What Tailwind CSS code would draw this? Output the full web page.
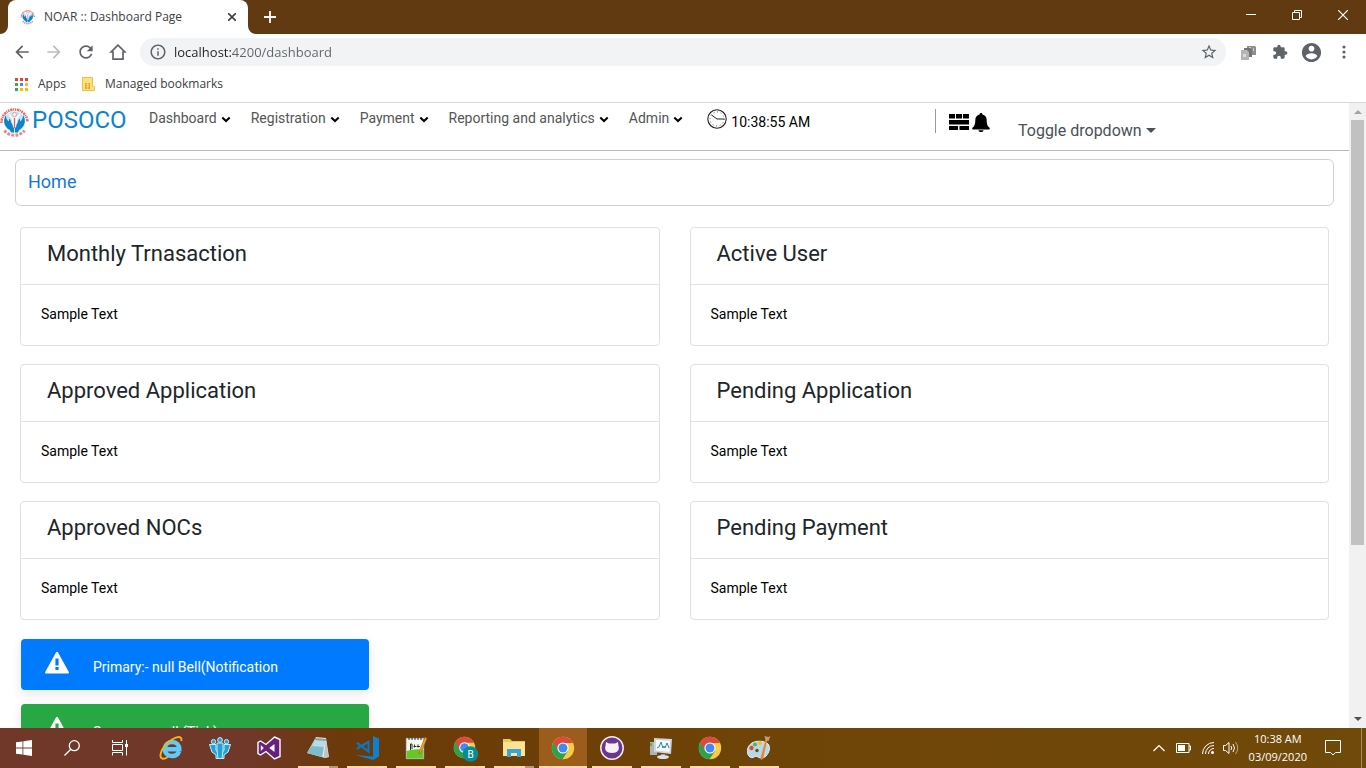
<!DOCTYPE html>
<html lang="en">

<head>
    <meta charset="UTF-8" />
    <meta name="viewport" content="width=device-width, initial-scale=1.0" />
    <title>NOAR :: Dashboard Page</title>
    <script src="https://cdn.jsdelivr.net/npm/@tailwindcss/browser@4"></script>
</head>

<body class="h-screen flex flex-col overflow-hidden bg-white font-['Roboto',sans-serif] text-black">
    <!-- Shared drawings -->
    <svg class="hidden">
        <symbol id="posoco" viewBox="0 0 32 32">
            <path d="M2.500 17A13 13 0 0 1 28.500 16" fill="none" stroke="#e0706c" stroke-width="2.600" stroke-dasharray="1.600 .7 2.400 .6 1 .7" />
            <path d="M5.500 24.500A12.800 12.800 0 0 0 25.500 24.500" fill="none" stroke="#e58a87" stroke-width="3" stroke-dasharray="2.800 1.300" />
            <circle cx="15.500" cy="16" r="10.500" fill="#bfe6f7" />
            <path d="M7 9c-3.500 5-2 12 4 15l1 2.500h3V20c-2-2-3-3-3.500-6L10 12.500v3C7.500 14 7 12 7 9zM24 9c3.500 5 2 12-4 15l-1 2.500h-3V20c2-2 3-3 3.500-6l1.500-1.500v3c2.500-1.500 3-3.500 3-6.500z" fill="#0b84cc" />
            <path d="M10.500 7.500l3.500 4h3l3.500-4 1 1-3.500 5.500-1 7.500h-3L13 14 9.500 8.500z" fill="#fff" />
            <circle cx="15.500" cy="8.500" r="2" fill="#fff" stroke="#e98f8b" stroke-width=".8" />
            <path d="M15.500 12v10" stroke="#df625e" stroke-width="1.400" />
        </symbol>
        <symbol id="chevron" viewBox="0 0 10 7">
            <path d="M1.300 1.500L5 5l3.700-3.500" fill="none" stroke="#000" stroke-width="2" />
        </symbol>
        <symbol id="warning" viewBox="0 0 24 24">
            <path d="M1 22.500h22c.8 0 1.200-.7.800-1.400L12.900 1.200c-.4-.7-1.400-.7-1.800 0L.2 21.100c-.4.700 0 1.400.8 1.400zM10.400 7.500h3.200v7h-3.200zm0 8.500h3.200v3h-3.200z" fill="#fff" fill-rule="evenodd" />
        </symbol>
        <symbol id="chrome" viewBox="0 0 24 24">
            <circle cx="12" cy="12" r="11.200" fill="#fbcb43" />
            <path d="M12 12L2.300 6.400A11.200 11.200 0 0 0 11.500 23.200L17 15z" fill="#2ba24c" />
            <path d="M12 12l-5 2.500L2.300 6.400A11.200 11.200 0 0 1 22 7H12z" fill="#dc4a3e" />
            <circle cx="12" cy="12" r="5.600" fill="#fff" />
            <circle cx="12" cy="12" r="4.500" fill="#4688f1" />
        </symbol>
    </svg>

    <!-- Tab strip -->
    <div class="h-[34px] shrink-0 bg-[#613a12] flex items-stretch pl-2">
        <div class="relative w-60 bg-white rounded-t-lg flex items-center px-3 font-['Open_Sans',sans-serif] text-xs text-[#3c4043]">
            <svg class="absolute bottom-0 -left-2 size-2" viewBox="0 0 8 8"><path d="M8 0v8H0a8 8 0 0 0 8-8z" fill="#fff" /></svg>
            <svg class="absolute bottom-0 -right-2 size-2" viewBox="0 0 8 8"><path d="M0 0v8h8a8 8 0 0 1-8-8z" fill="#fff" /></svg>
            <svg class="size-4 mr-2"><use href="#posoco" /></svg>
            <span class="flex-1 whitespace-nowrap">NOAR :: Dashboard Page</span>
            <button aria-label="Close tab"><svg class="size-2" viewBox="0 0 8 8"><path d="M0 0l8 8M8 0L0 8" stroke="#3c4043" stroke-width="1.600" /></svg></button>
        </div>
        <button aria-label="New tab" class="ml-4"><svg class="size-3" viewBox="0 0 12 12"><path d="M6 0v12M0 6h12" stroke="#fff" stroke-width="1.800" /></svg></button>
        <div class="ml-auto flex pb-[5px]">
            <button aria-label="Minimize" class="w-[46px] flex items-center justify-center"><svg class="size-[10px]" viewBox="0 0 10 10"><path d="M0 4.500h10" stroke="#fff" /></svg></button>
            <button aria-label="Restore" class="w-[46px] flex items-center justify-center"><svg class="size-[10px]" viewBox="0 0 10 10"><path d="M.5 2.500h7v7h-7zM2.500 2.500v-2h7v7h-2" fill="none" stroke="#fff" /></svg></button>
            <button aria-label="Close" class="w-[46px] flex items-center justify-center"><svg class="size-[10px]" viewBox="0 0 10 10"><path d="M0 0l10 10M10 0L0 10" stroke="#fff" stroke-width="1.200" /></svg></button>
        </div>
    </div>

    <!-- Address bar -->
    <div class="h-9 shrink-0 flex items-center pl-3 pr-[13px] text-[#5f6368]">
        <button aria-label="Back" class="mr-3"><svg class="size-5" viewBox="0 0 24 24" fill="currentColor"><path d="M20 11H7.830l5.590-5.590L12 4l-8 8 8 8 1.410-1.410L7.830 13H20v-2z" /></svg></button>
        <button aria-label="Forward" class="mr-3 text-[#babcbe]"><svg class="size-5" viewBox="0 0 24 24" fill="currentColor"><path d="M12 4l-1.410 1.410L16.170 11H4v2h12.170l-5.580 5.590L12 20l8-8z" /></svg></button>
        <button aria-label="Reload" class="mr-3"><svg class="size-5" viewBox="0 0 24 24" fill="currentColor"><path d="M17.650 6.350C16.200 4.900 14.210 4 12 4c-4.420 0-7.990 3.580-7.990 8s3.570 8 7.990 8c3.730 0 6.840-2.550 7.730-6h-2.080c-.82 2.330-3.040 4-5.650 4-3.310 0-6-2.690-6-6s2.690-6 6-6c1.660 0 3.140.69 4.220 1.780L13 11h7V4l-2.350 2.350z" /></svg></button>
        <button aria-label="Home" class="mr-3"><svg class="size-5" viewBox="0 0 24 24" fill="none" stroke="currentColor" stroke-width="2"><path d="M12 3.800L3.800 12H6v8.500h12V12h2.200z" /></svg></button>
        <div class="flex-1 h-7 rounded-full bg-[#f1f3f4] flex items-center px-2">
            <svg class="size-[18px] mx-px" viewBox="0 0 24 24" fill="currentColor"><path d="M11 7h2v2h-2zm0 4h2v6h-2zm1-9C6.480 2 2 6.480 2 12s4.480 10 10 10 10-4.480 10-10S17.520 2 12 2zm0 18c-4.410 0-8-3.590-8-8s3.590-8 8-8 8 3.590 8 8-3.590 8-8 8z" /></svg>
            <input type="text" aria-label="Address" value="localhost:4200/dashboard" class="flex-1 ml-[6px] pt-[2px] outline-none font-['Open_Sans',sans-serif] text-[13px] text-transparent bg-clip-text bg-[linear-gradient(90deg,#202124_57px,#5f6368_57px)]" />
            <button aria-label="Bookmark this tab"><svg class="size-[18px]" viewBox="0 0 24 24" fill="currentColor"><path d="M22 9.240l-7.190-.62L12 2 9.190 8.630 2 9.240l5.460 4.730L5.820 21 12 17.270 18.180 21l-1.630-7.030L22 9.240zM12 15.400l-3.760 2.270 1-4.280-3.320-2.880 4.380-.38L12 6.100l1.710 4.040 4.380.38-3.320 2.880 1 4.280L12 15.400z" /></svg></button>
        </div>
        <div class="flex items-center ml-3">
            <button aria-label="Copy extension" class="mr-4 ml-[3px]"><svg class="size-[15px]" viewBox="0 0 15 15"><path d="M6 1h8l1 1v8H6z" fill="#8d8d8d" /><path d="M8 2h2v1H8zM12 3h1v3h-1z" fill="#ccc" /><path d="M3 3h6l2 2v7H3z" fill="#747474" /><path d="M0 5h6l2 2v8H0z" fill="#b5b5b5" /><path d="M2 9h3v3H2z" fill="#dadada" /></svg></button>
            <button aria-label="Extensions" class="mr-3"><svg class="size-4" viewBox="0 0 24 24" fill="currentColor"><path d="M20.500 11H19V7c0-1.100-.9-2-2-2h-4V3.500C13 2.120 11.880 1 10.500 1S8 2.120 8 3.500V5H4c-1.100 0-1.990.9-1.990 2v3.800H3.500c1.490 0 2.700 1.210 2.700 2.700s-1.210 2.700-2.700 2.700H2V20c0 1.100.9 2 2 2h3.800v-1.500c0-1.490 1.210-2.700 2.700-2.700 1.490 0 2.700 1.210 2.700 2.700V22H17c1.100 0 2-.9 2-2v-4h1.500c1.380 0 2.500-1.120 2.500-2.500S21.880 11 20.500 11z" /></svg></button>
            <button aria-label="Profile" class="mr-3"><svg class="size-[23px]" viewBox="0 0 24 24" fill="currentColor"><path d="M12 2C6.480 2 2 6.480 2 12s4.480 10 10 10 10-4.480 10-10S17.520 2 12 2zm0 3c1.660 0 3 1.340 3 3s-1.340 3-3 3-3-1.340-3-3 1.340-3 3-3zm0 14.200c-2.500 0-4.710-1.280-6-3.220.03-1.990 4-3.080 6-3.080 1.990 0 5.970 1.090 6 3.080-1.290 1.940-3.500 3.220-6 3.220z" /></svg></button>
            <button aria-label="Menu"><svg class="size-[18px]" viewBox="0 0 18 18" fill="currentColor"><circle cx="9" cy="4" r="1.600" /><circle cx="9" cy="9" r="1.600" /><circle cx="9" cy="14" r="1.600" /></svg></button>
        </div>
    </div>

    <!-- Bookmarks -->
    <div class="h-[33px] shrink-0 border-b border-[#d6d8db] flex items-center pb-1 pl-[15px] font-['Open_Sans',sans-serif] text-xs text-[#3c4043]">
        <a href="#" class="flex items-center mr-4">
            <svg class="size-[13px] mr-[10px]" viewBox="0 0 13 13">
                <path d="M0 0h3v3H0zM5 0h3v3H5z" fill="#ea4335" /><path d="M10 0h3v3h-3z" fill="#ea4335" />
                <path d="M0 5h3v3H0zM0 10h3v3H0z" fill="#34a853" /><path d="M5 5h3v3H5z" fill="#4285f4" />
                <path d="M10 5h3v3h-3zM5 10h3v3H5zM10 10h3v3h-3z" fill="#fbbc05" />
            </svg>Apps</a>
        <a href="#" class="flex items-center">
            <svg class="w-[13px] h-[14px] mr-[10px]" viewBox="0 0 13 14"><path d="M.5.500h10v9h2v4H.5z" fill="#ffe07d" stroke="#edc244" /><path d="M3 6h5v6H3z" fill="#e0ad2f" /><path d="M4 7.500h3M4 9.500h3M5.500 6v6" stroke="#ffe07d" stroke-width=".7" /></svg>Managed bookmarks</a>
    </div>

    <!-- Page viewport -->
    <div class="flex-1 min-h-0 flex">
        <div class="flex-1 min-w-0 overflow-hidden">
            <header class="h-12 border-b border-[#b9b9bd] flex items-start text-sm">
                <a href="#" class="flex items-start w-[149px] text-2xl leading-[34px] text-[#0b84cc]"><svg class="size-8 mt-[3px] -ml-px mr-px"><use href="#posoco" /></svg>POSOCO</a>
                <nav class="flex gap-5 pt-[5px] leading-5 text-[#555]">
                    <button class="flex items-center gap-1">Dashboard<svg class="w-[10px] h-[7px] mt-[2px]"><use href="#chevron" /></svg></button>
                    <button class="flex items-center gap-1">Registration<svg class="w-[10px] h-[7px] mt-[2px]"><use href="#chevron" /></svg></button>
                    <button class="flex items-center gap-1">Payment<svg class="w-[10px] h-[7px] mt-[2px]"><use href="#chevron" /></svg></button>
                    <button class="flex items-center gap-1">Reporting and analytics<svg class="w-[10px] h-[7px] mt-[2px]"><use href="#chevron" /></svg></button>
                    <button class="flex items-center gap-1">Admin<svg class="w-[10px] h-[7px] mt-[2px]"><use href="#chevron" /></svg></button>
                </nav>
                <div class="flex items-start ml-6 pt-[6px]">
                    <svg class="size-5 mr-1" viewBox="0 0 20 20" fill="none" stroke="#222"><circle cx="10" cy="10" r="9.200" stroke-width="1.100" /><path d="M4.500 6L10 10h7.500" stroke-width="1" /><circle cx="10" cy="10" r="7" stroke-width="1" stroke-dasharray=".7 2.965" /></svg>
                    <span class="pt-[3px] leading-5">10:38:55 AM</span>
                </div>
                <div class="ml-auto w-[414px] flex items-start pt-[6px]">
                    <div class="w-px h-6 bg-[#999] mr-[13px]"></div>
                    <button aria-label="Grid" class="mt-[5px] mr-[3px]"><svg class="w-5 h-4" viewBox="0 0 20 16"><path d="M0 0h6v4.500H0zM7 0h6v4.500H7zM14 0h6v4.500h-6zM0 6h9.500v4.500H0zM9.500 6H20v4.500H9.500zM0 12h9v4H0zM10.500 12H20v4h-9.500z" /></svg></button>
                    <button aria-label="Notifications" class="mt-1"><svg class="w-[18px] h-[19px]" viewBox="0 0 18 19"><path d="M9 0c-.9 0-1.400.6-1.400 1.400C4.800 2 3.300 4 3.300 7c0 4.500-1 6.200-2.600 7.600-.9.800-.5 2 .6 2h15.400c1.100 0 1.500-1.200.6-2-1.600-1.400-2.600-3.100-2.600-7.600 0-3-1.500-5-4.300-5.600C10.400.6 9.900 0 9 0zM6.500 17.200h5c0 1-1 1.800-2.500 1.800s-2.500-.8-2.500-1.800z" /></svg></button>
                    <button class="ml-7 mt-[10px] flex items-center gap-1 text-base text-[#495057]">Toggle dropdown<svg class="w-[10px] h-[5px] mb-[2px]" viewBox="0 0 10 5"><path d="M0 0h10L5 5z" fill="currentColor" /></svg></button>
                </div>
            </header>

            <main class="px-[15px] pt-2">
                <div class="h-[47px] border border-[#ced0d3] rounded-md pl-3 pr-3 flex items-center text-lg">
                    <a href="#" class="text-[#1976d2] pb-[2px]">Home</a>
                </div>

                <!-- Summary cards -->
                <div class="grid grid-cols-2 gap-x-[30px] gap-y-[18px] px-[5px] mt-[21px]">
                    <section class="border border-[#dfe1e6] rounded">
                        <h2 class="h-[57px] border-b border-[#dfe1e6] pl-[26px] pt-[9px] text-[22px] leading-[33px] text-[#212529]">Monthly Trnasaction</h2>
                        <p class="px-5 pt-[19px] pb-[21px] text-sm">Sample Text</p>
                    </section>
                    <section class="border border-[#dfe1e6] rounded">
                        <h2 class="h-[57px] border-b border-[#dfe1e6] pl-[26px] pt-[9px] text-[22px] leading-[33px] text-[#212529]">Active User</h2>
                        <p class="px-5 pt-[19px] pb-[21px] text-sm">Sample Text</p>
                    </section>
                    <section class="border border-[#dfe1e6] rounded">
                        <h2 class="h-[57px] border-b border-[#dfe1e6] pl-[26px] pt-[9px] text-[22px] leading-[33px] text-[#212529]">Approved Application</h2>
                        <p class="px-5 pt-[19px] pb-[21px] text-sm">Sample Text</p>
                    </section>
                    <section class="border border-[#dfe1e6] rounded">
                        <h2 class="h-[57px] border-b border-[#dfe1e6] pl-[26px] pt-[9px] text-[22px] leading-[33px] text-[#212529]">Pending Application</h2>
                        <p class="px-5 pt-[19px] pb-[21px] text-sm">Sample Text</p>
                    </section>
                    <section class="border border-[#dfe1e6] rounded">
                        <h2 class="h-[57px] border-b border-[#dfe1e6] pl-[26px] pt-[9px] text-[22px] leading-[33px] text-[#212529]">Approved NOCs</h2>
                        <p class="px-5 pt-[19px] pb-[21px] text-sm">Sample Text</p>
                    </section>
                    <section class="border border-[#dfe1e6] rounded">
                        <h2 class="h-[57px] border-b border-[#dfe1e6] pl-[26px] pt-[9px] text-[22px] leading-[33px] text-[#212529]">Pending Payment</h2>
                        <p class="px-5 pt-[19px] pb-[21px] text-sm">Sample Text</p>
                    </section>
                </div>

                <!-- Toasts -->
                <div class="ml-[6px] mt-[19px] w-[348px] flex flex-col gap-[14px] text-sm text-white">
                    <div class="h-[51px] bg-[#007bff] rounded-sm shadow-[0_4px_12px_rgba(0,0,0,0.1)] flex px-6 pt-3">
                        <svg class="w-6 h-6 mr-6"><use href="#warning" /></svg>
                        <span class="pt-[6px]">Primary:- null Bell(Notification</span>
                    </div>
                    <div class="h-[51px] bg-[#28a745] rounded-sm shadow-[0_4px_12px_rgba(0,0,0,0.1)] flex px-6 pt-3">
                        <svg class="w-6 h-6 mr-6"><use href="#warning" /></svg>
                        <span class="pt-[6px]">Success:- null (Tick)</span>
                    </div>
                </div>
            </main>
        </div>

        <!-- Scrollbar -->
        <div class="w-[17px] bg-[#f1f1f1] flex flex-col items-center">
            <svg class="w-[17px] h-[17px] shrink-0" viewBox="0 0 17 17"><path d="M5 11h8L9 7z" fill="#a3a3a3" /></svg>
            <div class="w-[13px] h-[68%] bg-[#c1c1c1]"></div>
            <svg class="w-[17px] h-[17px] shrink-0 mt-auto" viewBox="0 0 17 17"><path d="M5 6h8l-4 4z" fill="#505050" /></svg>
        </div>
    </div>

    <!-- Taskbar -->
    <footer class="h-10 shrink-0 flex items-stretch text-white bg-[linear-gradient(90deg,#6f3828_0px,#6f3828_250px,#6b3a08_345px,#6f4507_800px,#704a0a_1366px)]">
        <div class="flex mr-[3px]">
            <button aria-label="Start" class="w-12 flex items-center justify-center"><svg class="size-4" viewBox="0 0 16 16" fill="#fff"><path d="M0 2.300l6.500-.9v6.100H0zM7.300 1.200L16 0v7.500H7.300zM0 8.400h6.500v6.200L0 13.700zM7.300 8.400H16V16l-8.700-1.300z" /></svg></button>
            <button aria-label="Search" class="w-12 flex items-center justify-center"><svg class="size-4" viewBox="0 0 16 16" fill="none" stroke="#fff" stroke-width="1.300"><circle cx="10.300" cy="5.700" r="5" /><path d="M6.800 9.200L.5 15.500" /></svg></button>
            <button aria-label="Task view" class="w-12 flex items-center justify-center"><svg class="size-4" viewBox="0 0 16 16" fill="none" stroke="#fff"><path d="M.5 0v2.500h10V0M.5 4.500h10v6H.5zM.5 15.500v-3h10v3M14.500 0v15.500" /><path d="M13 4h3v3h-3z" fill="#fff" stroke="none" /></svg></button>
        </div>
        <div class="flex gap-px">
            <button aria-label="Internet Explorer" class="w-12 flex items-center justify-center"><svg class="size-6" viewBox="0 0 24 24" fill="none"><path d="M20 15.500c-1 3-3.500 4.500-7 4.500-4.500 0-7.200-3-7.200-7s3-7 7.200-7c4.700 0 7.300 2.900 7.300 7.300H7" stroke="#5fcbf8" stroke-width="4.400" /><path d="M3 22.500C-1.500 19.500 5 8 13 3.500 18 .5 23.500-.5 22.300 5M3 22.500c1.500.6 4-.3 6-1.800" stroke="#f3b51d" stroke-width="1.900" /></svg></button>
            <button aria-label="POSOCO" class="w-12 flex items-center justify-center"><svg class="size-[22px]" viewBox="0 0 22 22"><g stroke="#c9ecfa" stroke-width="1" fill="#1ea3da"><path d="M.5 7.500h6.500v6l2.500 2v6H7V18l-4-3zM21.500 7.500H15v6l-2.500 2v6H15V18l4-3z" /><path d="M8 6h6v7l-1 8.500H9L8 13z" /><circle cx="4.500" cy="4.700" r="2.200" /><circle cx="17.500" cy="4.700" r="2.200" /><circle cx="11" cy="3" r="2.400" /></g></svg></button>
            <button aria-label="Visual Studio" class="w-12 flex items-center justify-center"><svg class="size-6" viewBox="0 0 24 24"><path d="M17.500 1L23 3.500v17L17.500 23 9 15.500 3.500 19 1 17.500v-11L3.500 5 9 8.500z" fill="#68217a" stroke="#fff" stroke-width="1.400" /><path d="M17.500 8v8l-5.300-4zM3.800 9v6l3-3z" fill="#fff" /></svg></button>
            <button aria-label="Notepad" class="relative w-12 flex items-center justify-center"><svg class="size-6" viewBox="0 0 24 24"><path d="M10 1l10 1 3 19-4 1L1 17z" fill="#dfe5e7" /><path d="M9 4l10 1-3 16-15-4z" fill="#7fbccb" /><path d="M9 4l10 1-1 6-12-1z" fill="#b6dde5" /><path d="M9 2l11 1v2L8.500 4z" fill="#8f9ea3" /><path d="M20 4l2.500 17-5 1z" fill="#bcc5c8" /></svg><span class="absolute bottom-0 left-1 w-[31px] h-[2px] bg-[#ffd9b3]"></span><span class="absolute bottom-0 right-1 w-[9px] h-[2px] bg-[#b69679]"></span></button>
            <button aria-label="Visual Studio Code" class="relative w-12 flex items-center justify-center"><svg class="size-6" viewBox="0 0 24 24"><path d="M18 0l6 2.500v18L18 24 0 19l18 1.500z" fill="#0f7fd2" /><path d="M14.500 4v13.500L6 11.300 3 13.800 1 12.700l3-2.700-3-2.700 2-1.200 3 2.600z" fill="#0877c6" /><path d="M12.500 7.500v6L8.500 10.500z" fill="#6b3a08" /></svg><span class="absolute bottom-0 inset-x-1 h-[2px] bg-[#ffd9b3]"></span></button>
            <button aria-label="Notepad++" class="relative w-12 flex items-center justify-center"><svg class="size-6" viewBox="0 0 24 24"><path d="M2 2h18v21H2z" fill="#f6f7ef" stroke="#777" stroke-width=".7" /><path d="M2.500 15q9-3 17-1v8.500h-17z" fill="#69c528" /><path d="M5 1v3M8 1v3M11 1v3M14 1v3M17 1v3" stroke="#333" /><path d="M6.500 14V8h1.500v5M10.500 8.500v3M9.500 10.500h3M14 8.500v3M13 10.500h3" stroke="#253525" stroke-width="1" fill="none" /><path d="M21 1l2 1.500L17 17l-2 1 .3-2.500z" fill="#f0a21d" stroke="#835516" stroke-width=".5" /></svg><span class="absolute bottom-0 inset-x-1 h-[2px] bg-[#ffd9b3]"></span></button>
            <button aria-label="Chrome profile B" class="relative w-12 flex items-center justify-center"><svg class="size-6 overflow-visible" viewBox="0 0 24 24"><use href="#chrome" x="0" y="0" width="23" height="23" /><circle cx="17.500" cy="18" r="7.800" fill="#078c94" /><text x="17.500" y="21.500" text-anchor="middle" fill="#fff" font-family="Roboto" font-size="10">B</text></svg><span class="absolute bottom-0 inset-x-1 h-[2px] bg-[#ffd9b3]"></span></button>
            <button aria-label="File Explorer" class="relative w-12 flex items-center justify-center"><svg class="w-6 h-5" viewBox="0 0 24 20"><path d="M1 1h7l2 2h13v15H1z" fill="#f4c550" /><path d="M1 4h22v14H1z" fill="#ffe391" /><path d="M5 11h14v8h-4v-4H9v4H5z" fill="#38a4dd" /></svg><span class="absolute bottom-0 left-1 w-[31px] h-[2px] bg-[#ffd9b3]"></span><span class="absolute bottom-0 right-1 w-[9px] h-[2px] bg-[#b69679]"></span></button>
            <button aria-label="Chrome" class="relative w-12 flex items-center justify-center bg-[#9c5c1c]"><svg class="size-6"><use href="#chrome" /></svg><span class="absolute bottom-0 inset-x-0 h-[2px] bg-[#ffd9b3]"></span></button>
            <button aria-label="GitHub Desktop" class="relative w-12 flex items-center justify-center"><svg class="size-6" viewBox="0 0 24 24"><circle cx="12" cy="12" r="11.200" fill="#6d368e" stroke="#eee" stroke-width="1.500" /><path d="M6 6l3 1.500h6L18 6l.5 4c1.300 4-1 7-6.500 7s-7.800-3-6.500-7z" fill="#f4f1f7" /></svg><span class="absolute bottom-0 inset-x-1 h-[2px] bg-[#ffd9b3]"></span></button>
            <button aria-label="Performance Monitor" class="relative w-12 flex items-center justify-center"><svg class="size-6" viewBox="0 0 24 24"><path d="M1 6h7v13H1z" fill="#a9b4b8" /><path d="M1 7h2v3H1z" fill="#5bb63b" /><path d="M5 2l18 1-1 15-17-2z" fill="#cfd5d8" /><path d="M7 4l14 .8-.7 11L7 14.500z" fill="#f8fbfd" /><path d="M8 12l2-1 2-5 2 6 1-2 1 2 2-5 2 5" fill="none" stroke="#2985be" stroke-width="1" /><path d="M12 18h4v2h-4z" fill="#9ca3a6" /><ellipse cx="14" cy="21" rx="6" ry="2" fill="#dbe0e3" /></svg><span class="absolute bottom-0 inset-x-1 h-[2px] bg-[#ffd9b3]"></span></button>
            <button aria-label="Chrome" class="relative w-12 flex items-center justify-center"><svg class="size-6"><use href="#chrome" /></svg><span class="absolute bottom-0 inset-x-1 h-[2px] bg-[#ffd9b3]"></span></button>
            <button aria-label="Paint" class="relative w-12 flex items-center justify-center"><svg class="size-6" viewBox="0 0 24 24"><path d="M2 20C-1 17 0 10 5 7s13-2 16 1 1 9-2 12-7 2-8 1-3-1-4 0-4 1-5-1z" fill="#b5d9ec" stroke="#e4f1f8" /><circle cx="4.500" cy="12" r="2.200" fill="#d94b3c" /><circle cx="8" cy="8.500" r="2.100" fill="#58b947" /><circle cx="13" cy="7" r="2.100" fill="#f5bc32" /><circle cx="10" cy="14.500" r="1.700" fill="#704507" /><path d="M20 5l-4 18-2 1-.5-2L18.500 4z" fill="#e8852a" /><path d="M17.500 0l4 1 2-1-2 5h-3z" fill="#c09a70" /></svg><span class="absolute bottom-0 inset-x-1 h-[2px] bg-[#ffd9b3]"></span></button>
        </div>
        <div class="ml-auto flex items-center">
            <button aria-label="Show hidden icons" class="mr-[11px]"><svg class="w-3 h-2" viewBox="0 0 12 8"><path d="M.5 7L6 1.500 11.500 7" fill="none" stroke="#fff" stroke-width="1.200" /></svg></button>
            <svg class="w-[15px] h-[10px] mr-[11px]" viewBox="0 0 15 10"><path d="M.5.500h12.500v9H.5zM13 3h1.500v4H13" fill="none" stroke="#fff" /><path d="M2 2h7v6H2z" fill="#fff" /></svg>
            <svg class="size-3 mr-[9px]" viewBox="0 0 12 12" fill="none" stroke="#fff"><path d="M.5 12A11.500 11.500 0 0 1 12 .5M3.500 12A8.500 8.500 0 0 1 12 3.500M6.500 12A5.500 5.500 0 0 1 12 6.500" /><circle cx="10.500" cy="10.500" r="1.500" fill="#fff" stroke="none" /></svg>
            <svg class="w-4 h-[14px] mr-[10px]" viewBox="0 0 16 14" fill="none" stroke="#fff"><path d="M.5 4.500h2l3.500-3v11l-3.500-3h-2zM8 5q1.500 2 0 4M10 3q3 4 0 8" /><path d="M12.500 1q4.500 6 0 12" stroke-opacity=".5" /></svg>
            <div class="pb-px text-center whitespace-nowrap font-['Open_Sans',sans-serif] text-[11px] leading-[18px]">
                <div>10:38 AM</div>
                <div>03/09/2020</div>
            </div>
            <button aria-label="Notifications" class="ml-[18px] mr-5"><svg class="size-4" viewBox="0 0 16 16"><path d="M.5.500h15v12h-5L8 15l-2.500-2.500h-5z" fill="none" stroke="#fff" /></svg></button>
            <div class="w-px h-full mr-1 bg-[#a78c60]"></div>
        </div>
    </footer>
</body>

</html>
